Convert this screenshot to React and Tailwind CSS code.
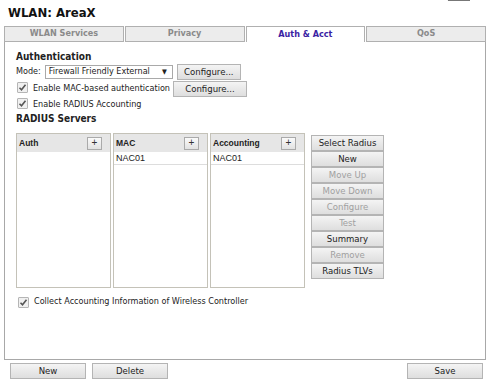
import React from "react";

const F = { fontFamily: '"Liberation Sans", Arial, sans-serif' };

function Check() {
  return (
    <span className="inline-flex items-center justify-center w-[11px] h-[11px] border border-[#b5b5b5] bg-[#f0f0f0] rounded-[1px] shrink-0">
      <svg width="9" height="9" viewBox="0 0 9 9">
        <path d="M1.5 4.8 L3.5 6.8 L7.5 1.8" stroke="#555" strokeWidth="1.6" fill="none" />
      </svg>
    </span>
  );
}

function Btn({ children, className = "", disabled = false }) {
  return (
    <div
      className={
        "flex items-center justify-center border border-[#b4b4b4] bg-gradient-to-b from-[#f4f4f4] to-[#dedede] text-[9.5px] leading-none " +
        (disabled ? "text-[#a0a0a0] " : "text-[#222] ") +
        className
      }
    >
      {children}
    </div>
  );
}

function ListBox({ title, items }) {
  return (
    <div className="w-[95px] h-[155px] border border-[#c4c2b8] bg-white flex flex-col">
      <div className="h-[18px] bg-[#e6e6e6] flex items-center justify-between pl-[2px] pr-[8px]">
        <span className="text-[8.5px] font-bold text-[#222]" style={F}>{title}</span>
        <span className="w-[15px] h-[13px] border border-[#aaa] bg-gradient-to-b from-[#fafafa] to-[#e2e2e2] flex items-center justify-center text-[10px] leading-none text-[#333]" style={F}>+</span>
      </div>
      {items.map((it) => (
        <div key={it} className="h-[13px] border-b border-[#ddd] pl-[2px] text-[9px] leading-[13px] text-[#222]" style={F}>{it}</div>
      ))}
    </div>
  );
}

export default function App() {
  const tabs = ["WLAN Services", "Privacy", "Auth & Acct", "QoS"];
  return (
    <div className="w-[490px] h-[384px] bg-white overflow-hidden text-[#222]" style={{ fontFamily: '"DejaVu Sans Condensed", "DejaVu Sans", sans-serif' }}>
      <div className="h-[26px] flex items-start justify-between">
        <div className="pl-[8px] pt-[4px] text-[13px] font-bold leading-[17px] text-[#111]">WLAN: AreaX</div>
        <div className="mr-[20px] mt-[-9px] text-[9px] leading-[11px] text-[#777] underline">Close</div>
      </div>
      <div className="mx-[4px] flex">
        {tabs.map((t, i) => (
          <div
            key={t}
            className={
              "w-[120px] h-[16px] flex items-center justify-center text-[9px] border border-[#b0b0b0] " +
              (i > 0 ? "ml-[1px] " : "") +
              (t === "Auth & Acct"
                ? "bg-white border-b-0 font-bold text-[#3b1fa3]"
                : "bg-[#ececec] text-[#8a8a8a] font-bold")
            }
          >
            {t}
          </div>
        ))}
      </div>
      <div className="mx-[4px] h-[318px] border border-t-0 border-[#a8a8a8] pl-[11px] pt-[9px] text-[9px]">
        <div className="font-bold text-[10px] leading-[12px]">Authentication</div>
        <div className="mt-[1px] flex items-center gap-[4px] h-[16px]">
          <span>Mode:</span>
          <div className="w-[128px] h-[14px] border border-[#a9a9a9] flex items-center justify-between pl-[3px] pr-[5px]">
            <span>Firewall Friendly External</span>
            <span className="text-[7px]">▼</span>
          </div>
          <Btn className="w-[64px] h-[16px]">Configure...</Btn>
        </div>
        <div className="mt-[1px] flex items-center h-[16px]">
          <span className="ml-[1px]"><Check /></span>
          <span className="ml-[5px]">Enable MAC-based authentication</span>
          <Btn className="w-[74px] h-[16px] ml-[3px]">Configure...</Btn>
        </div>
        <div className="mt-[1px] flex items-center h-[14px]">
          <span className="ml-[1px]"><Check /></span>
          <span className="ml-[5px]">Enable RADIUS Accounting</span>
        </div>
        <div className="mt-[1px] font-bold text-[10px] leading-[12px]">RADIUS Servers</div>
        <div className="mt-[8px] flex gap-[2px] items-start">
          <ListBox title="Auth" items={[]} />
          <ListBox title="MAC" items={["NAC01"]} />
          <ListBox title="Accounting" items={["NAC01"]} />
          <div className="ml-[4px] mt-[2px] flex flex-col w-[73px]">
            <Btn className="h-[16px]">Select Radius</Btn>
            <Btn className="h-[16px]">New</Btn>
            <Btn className="h-[16px]" disabled>Move Up</Btn>
            <Btn className="h-[16px]" disabled>Move Down</Btn>
            <Btn className="h-[16px]" disabled>Configure</Btn>
            <Btn className="h-[16px]" disabled>Test</Btn>
            <Btn className="h-[16px]">Summary</Btn>
            <Btn className="h-[16px]" disabled>Remove</Btn>
            <Btn className="h-[16px]">Radius TLVs</Btn>
          </div>
        </div>
        <div className="mt-[7px] ml-[2px] flex items-center h-[14px]">
          <Check />
          <span className="ml-[5px]">Collect Accounting Information of Wireless Controller</span>
        </div>
      </div>
      <div className="mt-[3px] flex px-[10px]">
        <Btn className="w-[76px] h-[16px]">New</Btn>
        <Btn className="w-[76px] h-[16px] ml-[6px]">Delete</Btn>
        <Btn className="w-[76px] h-[16px] ml-auto mr-[-3px]">Save</Btn>
      </div>
    </div>
  );
}
